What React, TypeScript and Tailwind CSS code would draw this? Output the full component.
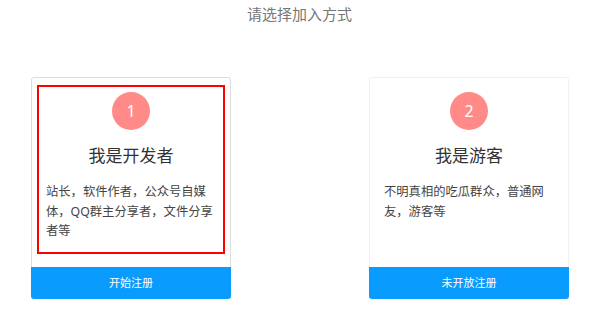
type CardProps = {
  num: number
  title: string
  desc: string
  action: string
  active?: boolean
}

function JoinCard({ num, title, desc, action, active }: CardProps) {
  return (
    <div
      className={`w-[200px] h-[222px] flex flex-col rounded-[3px] border bg-white ${
        active ? 'border-[#dcdcdc]' : 'border-[#f0f0f0]'
      }`}
    >
      {/* content, first card is outlined in red */}
      <div
        className={`mt-[7px] mx-[5px] h-[169px] border-2 px-[7px] pt-[5px] flex flex-col ${
          active ? 'border-[#ff0000]' : 'border-transparent'
        }`}
      >
        <div className="mx-auto w-[38px] h-[38px] rounded-full bg-[#ff8a87] flex items-center justify-center text-white text-[16px]">
          {num}
        </div>
        <h3 className="mt-[13px] text-center text-[17px] leading-[26px] text-[#333]">{title}</h3>
        <p className="mt-[13px] w-[168px] text-[12.3px] leading-[19.5px] text-[#444]">{desc}</p>
      </div>

      <button className="mt-auto -mx-px -mb-px h-[32px] rounded-b-[3px] bg-[#0a9bff] text-white text-[11px]">
        {action}
      </button>
    </div>
  )
}

export default function App() {
  return (
    <div
      className="w-[599px] h-[322px] bg-white"
      style={{ fontFamily: '"Noto Sans", "Noto Sans CJK SC", sans-serif' }}
    >
      <h2 className="pt-[4px] text-center text-[15px] leading-[20px] text-[#777]">请选择加入方式</h2>

      <div className="mt-[53px] flex justify-between pl-[31px] pr-[30px]">
        <JoinCard
          num={1}
          title="我是开发者"
          desc="站长，软件作者，公众号自媒体，QQ群主分享者，文件分享者等"
          action="开始注册"
          active
        />
        <JoinCard
          num={2}
          title="我是游客"
          desc="不明真相的吃瓜群众，普通网友，游客等"
          action="未开放注册"
        />
      </div>
    </div>
  )
}
